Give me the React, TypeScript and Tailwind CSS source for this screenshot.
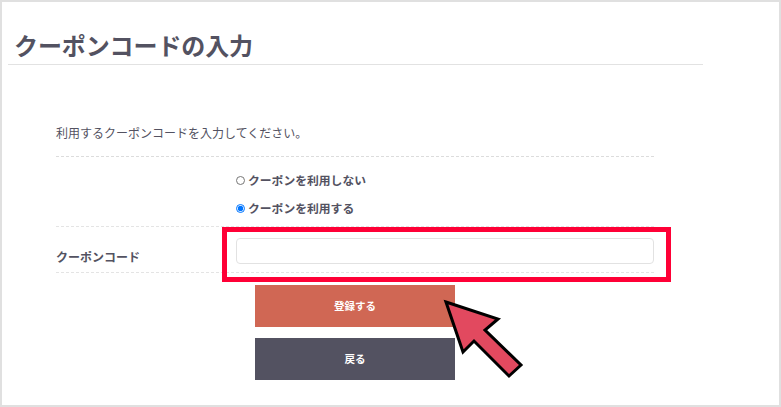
const FONT = "font-['Noto_Sans_CJK_JP','Noto_Sans',sans-serif]"

const COUPON_OPTIONS = [
  { label: 'クーポンを利用しない', checked: false },
  { label: 'クーポンを利用する', checked: true },
]

export default function App() {
  return (
    <div className={`relative box-border h-[407px] w-[781px] overflow-hidden border-2 border-[#e0e0e0] bg-white text-[#535261] ${FONT}`}>
      <div className="ml-[6px] h-[63px] w-[695px] border-b border-[#e2e2e2] pl-[6px] pt-[25px]">
        <h1 className="text-[24px] font-bold leading-[36px] tracking-[-0.1px]">クーポンコードの入力</h1>
      </div>

      <div className="ml-[54px] w-[598px]">
        <p className="mt-[59px] h-[33px] border-b border-dashed border-[#dcdcdc] text-[12px] leading-[18px]">
          利用するクーポンコードを入力してください。
        </p>

        <div className="h-[70px] border-b border-dashed border-[#e4e4e4] pl-[180px] pt-[14px]">
          {COUPON_OPTIONS.map(({ label, checked }) => (
            <label key={label} className="mb-[10px] flex h-[18px] items-center gap-[3px] text-[11.8px] font-bold leading-[18px]">
              <input type="radio" name="coupon" defaultChecked={checked} className="m-0 h-[9px] w-[9px]" />
              {label}
            </label>
          ))}
        </div>

        <div className="flex h-[46px] items-start border-b border-dashed border-[#e4e4e4]">
          <span className="w-[180px] pt-[21px] text-[12px] font-bold leading-[18px]">クーポンコード</span>
          <input type="text" className="mt-[11px] box-border h-[26px] w-[419px] rounded-[4px] border border-[#e2e2e2] bg-white" />
        </div>

        <div className="ml-[199px] mt-[12px] flex w-[200px] flex-col gap-[11px] text-[10.5px] font-bold text-white">
          <button className="h-[42px] bg-[#d06754]">登録する</button>
          <button className="h-[42px] bg-[#535261]">戻る</button>
        </div>
      </div>

      {/* 赤枠と矢印 */}
      <div className="absolute left-[220px] top-[225px] box-border h-[55px] w-[449px] border-[5px] border-[#ff0036]" />
      <svg className="absolute left-[-2px] top-[-2px]" width="781" height="407" viewBox="0 0 781 407">
        <path
          d="M446 302 L498 319 L485 330 L521 365 L509 376 L474 341 L463 352 Z"
          fill="#e2495f"
          stroke="#000"
          strokeWidth="3"
          strokeLinejoin="miter"
        />
      </svg>
    </div>
  )
}
